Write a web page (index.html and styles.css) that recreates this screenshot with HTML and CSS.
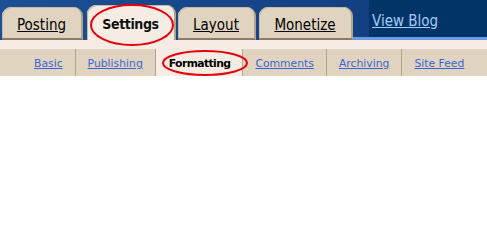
FILE: index.html
```html
<!DOCTYPE html>
<html lang="en">
<head>
    <meta charset="UTF-8">
    <title>Settings - Formatting</title>
    <link rel="stylesheet" href="styles.css">
</head>
<body>
    <div class="topbar">
        <ul class="tabs">
            <li class="tab tab-posting"><a href="#">Posting</a></li>
            <li class="tab tab-settings active"><a href="#">Settings</a></li>
            <li class="tab tab-layout"><a href="#">Layout</a></li>
            <li class="tab tab-monetize"><a href="#">Monetize</a></li>
        </ul>
        <div class="viewblog-wrap">
            <div class="viewblog"><a href="#">View Blog</a></div>
        </div>
    </div>
    <div class="stripe"></div>
    <ul class="subnav">
        <li><a href="#">Basic</a></li>
        <li><a href="#">Publishing</a></li>
        <li class="current"><span>Formatting</span></li>
        <li><a href="#">Comments</a></li>
        <li><a href="#">Archiving</a></li>
        <li><a href="#">Site Feed</a></li>
    </ul>

    <!-- hand-drawn highlight marks -->
    <svg class="marks" width="487" height="80" viewBox="0 0 487 80">
        <ellipse cx="132" cy="25" rx="41" ry="20" />
        <ellipse cx="205" cy="63" rx="42" ry="12" />
    </svg>
</body>
</html>
```

FILE: styles.css
```css
body {
    margin: 0;
    padding: 0;
    background-color: #ffffff;
    font-family: "DejaVu Sans", Verdana, sans-serif;
    position: relative;
}

.topbar {
    display: flex;
    height: 40px;
    background: linear-gradient(to right, #1c4f95, #0f3b7b);
}

.tabs {
    display: flex;
    align-items: flex-end;
    list-style: none;
    margin: 0;
    padding: 0 0 0 2px;
}

.tab {
    display: flex;
    align-items: center;
    justify-content: center;
    box-sizing: border-box;
    height: 33px;
    margin-right: 3px;
    padding: 4px 0 0;
    background-color: #e0d4c0;
    border-radius: 9px 9px 0 0;
    border-right: 2px solid #b3a38b;
    border-bottom: 2px solid #8b7b63;
    box-shadow: inset 1px 1px 0 #c8b9a2;
    font-family: "DejaVu Sans Condensed", "DejaVu Sans", sans-serif;
    font-size: 15px;
}

.tab-posting { width: 81px; margin-right: 4px; }
.tab-settings { width: 89px; margin-right: 2px; }
.tab-layout { width: 78px; }
.tab-monetize { width: 94px; margin-right: 0; }

.tab a {
    color: #000000;
}

.tab.active {
    height: 35px;
    background-color: #f5ede3;
    border-bottom: none;
    padding-bottom: 2px;
    font-size: 14px;
    font-weight: bold;
    letter-spacing: -0.4px;
}

.tab.active a {
    text-decoration: none;
    color: #111111;
}

.viewblog-wrap {
    flex: 1;
    display: flex;
    padding-left: 16px;
    border-bottom: 3px solid #6a9ae6;
}

.viewblog {
    flex: 1;
    display: flex;
    align-items: center;
    padding: 5px 0 0 3px;
    background-color: #023467;
    font-family: "DejaVu Sans Condensed", "DejaVu Sans", sans-serif;
    font-size: 15px;
}

.viewblog a {
    color: #a4ccf6;
}

.stripe {
    height: 9px;
    background-color: #f5ede3;
}

.subnav {
    display: flex;
    list-style: none;
    margin: 0;
    padding: 0 0 0 22px;
    height: 27px;
    background-color: #e0d4c0;
    font-size: 10.8px;
}

.subnav li {
    display: flex;
    align-items: center;
    padding: 2px 12px 0;
    border-left: 1px solid #b4a48c;
}

.subnav li:first-child {
    border-left: none;
}

.subnav a {
    color: #3a63d8;
}

.subnav .current {
    background-color: #f5ede3;
    padding-left: 13px;
    font-weight: bold;
    letter-spacing: -0.6px;
    color: #000000;
}

.marks {
    position: absolute;
    left: 0;
    top: 0;
    pointer-events: none;
}

.marks ellipse {
    fill: none;
    stroke: #e8000b;
    stroke-width: 2;
}
```
